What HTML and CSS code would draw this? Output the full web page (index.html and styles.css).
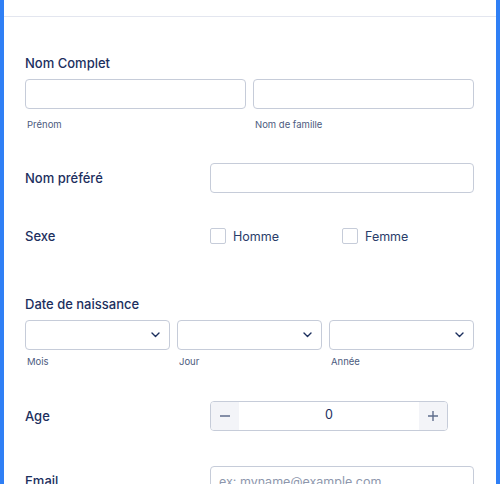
FILE: index.html
```html
<!DOCTYPE html>
<html lang="fr">
<head>
<meta charset="utf-8">
<link rel="stylesheet" href="styles.css">
</head>
<body>
<div class="form">
  <div class="form-top"></div>
  <div class="fields">
    <div class="row row-stack first">
      <div class="label">Nom Complet</div>
      <div class="cols cols-2">
        <div class="col"><div class="input"></div><div class="sub">Prénom</div></div>
        <div class="col"><div class="input"></div><div class="sub">Nom de famille</div></div>
      </div>
    </div>

    <div class="row row-side">
      <div class="label side">Nom préféré</div>
      <div class="control"><div class="input"></div></div>
    </div>

    <div class="row row-side row-check">
      <div class="label side">Sexe</div>
      <div class="control checks">
        <label class="check"><span class="box"></span>Homme</label>
        <label class="check"><span class="box"></span>Femme</label>
      </div>
    </div>

    <div class="row row-stack row-date">
      <div class="label">Date de naissance</div>
      <div class="cols cols-3">
        <div class="col"><div class="input select"><svg class="chev" width="9" height="6" viewBox="0 0 9 6"><path d="M1 1l3.5 3.5L8 1" fill="none" stroke="#1c2f5e" stroke-width="1.4" stroke-linecap="round" stroke-linejoin="round"/></svg></div><div class="sub">Mois</div></div>
        <div class="col"><div class="input select"><svg class="chev" width="9" height="6" viewBox="0 0 9 6"><path d="M1 1l3.5 3.5L8 1" fill="none" stroke="#1c2f5e" stroke-width="1.4" stroke-linecap="round" stroke-linejoin="round"/></svg></div><div class="sub">Jour</div></div>
        <div class="col"><div class="input select"><svg class="chev" width="9" height="6" viewBox="0 0 9 6"><path d="M1 1l3.5 3.5L8 1" fill="none" stroke="#1c2f5e" stroke-width="1.4" stroke-linecap="round" stroke-linejoin="round"/></svg></div><div class="sub">Année</div></div>
      </div>
    </div>

    <div class="row row-side row-age">
      <div class="label side">Age</div>
      <div class="control">
        <div class="spinner">
          <span class="spin-btn"><svg width="12" height="12" viewBox="0 0 12 12"><path d="M1 6h10" stroke="#5f6d8c" stroke-width="1.4"/></svg></span>
          <span class="spin-val">0</span>
          <span class="spin-btn"><svg width="12" height="12" viewBox="0 0 12 12"><path d="M1 6h10M6 1v10" stroke="#5f6d8c" stroke-width="1.4"/></svg></span>
        </div>
      </div>
    </div>

    <div class="row row-side row-email">
      <div class="label side">Email</div>
      <div class="control"><div class="input"><span class="ph">ex: myname@example.com</span></div></div>
    </div>
  </div>
</div>
</body>
</html>
```
FILE: styles.css
```css
* { box-sizing: border-box; }
html, body { margin: 0; padding: 0; }
body {
  font-family: Inter, "Noto Sans", sans-serif;
  background: #fff;
  height: 484px;
  overflow: hidden;
}
.form {
  border-left: 4px solid #2f7ff5;
  border-right: 4px solid #2f7ff5;
  min-height: 484px;
  background: #fff;
}
.form-top {
  height: 17px;
  border-bottom: 1px solid #e3e6ef;
}
.fields {
  padding: 0 22px 0 21px;
}
.row { margin-top: 31px; }
.row.first { margin-top: 36px; }
.row-check { margin-top: 33px; }
.row-date { margin-top: 48px; }
.row-age { margin-top: 32px; }
.row-email { margin-top: 35px; }
.label {
  font-size: 13px;
  font-weight: 500;
  line-height: 20px;
  color: #1c2f5e;
}
.cols { display: grid; gap: 7px; margin-top: 6px; }
.cols-2 { grid-template-columns: 1fr 1fr; }
.cols-3 { grid-template-columns: 1fr 1fr 1fr; }
.input {
  height: 30px;
  border: 1px solid #c6ccd9;
  border-radius: 4px;
  background: #fff;
  display: flex;
  align-items: center;
  padding: 0 8px;
}
.select { justify-content: flex-end; padding-right: 9px; }
.chev { display: block; }
.sub {
  font-size: 9.5px;
  line-height: 14px;
  color: #4c5b7e;
  margin-top: 9px;
  padding-left: 2px;
}
.row-date .sub { margin-top: 5px; }
.row-side {
  display: flex;
  align-items: center;
}
.label.side { width: 185px; flex: none; }
.control { flex: 1; }
.checks {
  display: flex;
  height: 20px;
  align-items: center;
}
.check {
  display: flex;
  align-items: center;
  width: 132px;
  font-size: 12.5px;
  color: #2a3d6a;
}
.box {
  width: 16px;
  height: 16px;
  border: 1px solid #c6ccd9;
  border-radius: 2px;
  margin-right: 7px;
  background: #fff;
}
.spinner {
  width: 238px;
  height: 30px;
  border: 1px solid #c6ccd9;
  border-radius: 4px;
  display: flex;
  overflow: hidden;
}
.spin-btn {
  width: 28px;
  flex: none;
  background: #f3f4f8;
  display: flex;
  align-items: center;
  justify-content: center;
}
.spin-val {
  flex: 1;
  text-align: center;
  font-size: 12.5px;
  line-height: 26px;
  color: #1c2f5e;
}
.ph {
  font-size: 12.5px;
  color: #8e97ad;
}
```
